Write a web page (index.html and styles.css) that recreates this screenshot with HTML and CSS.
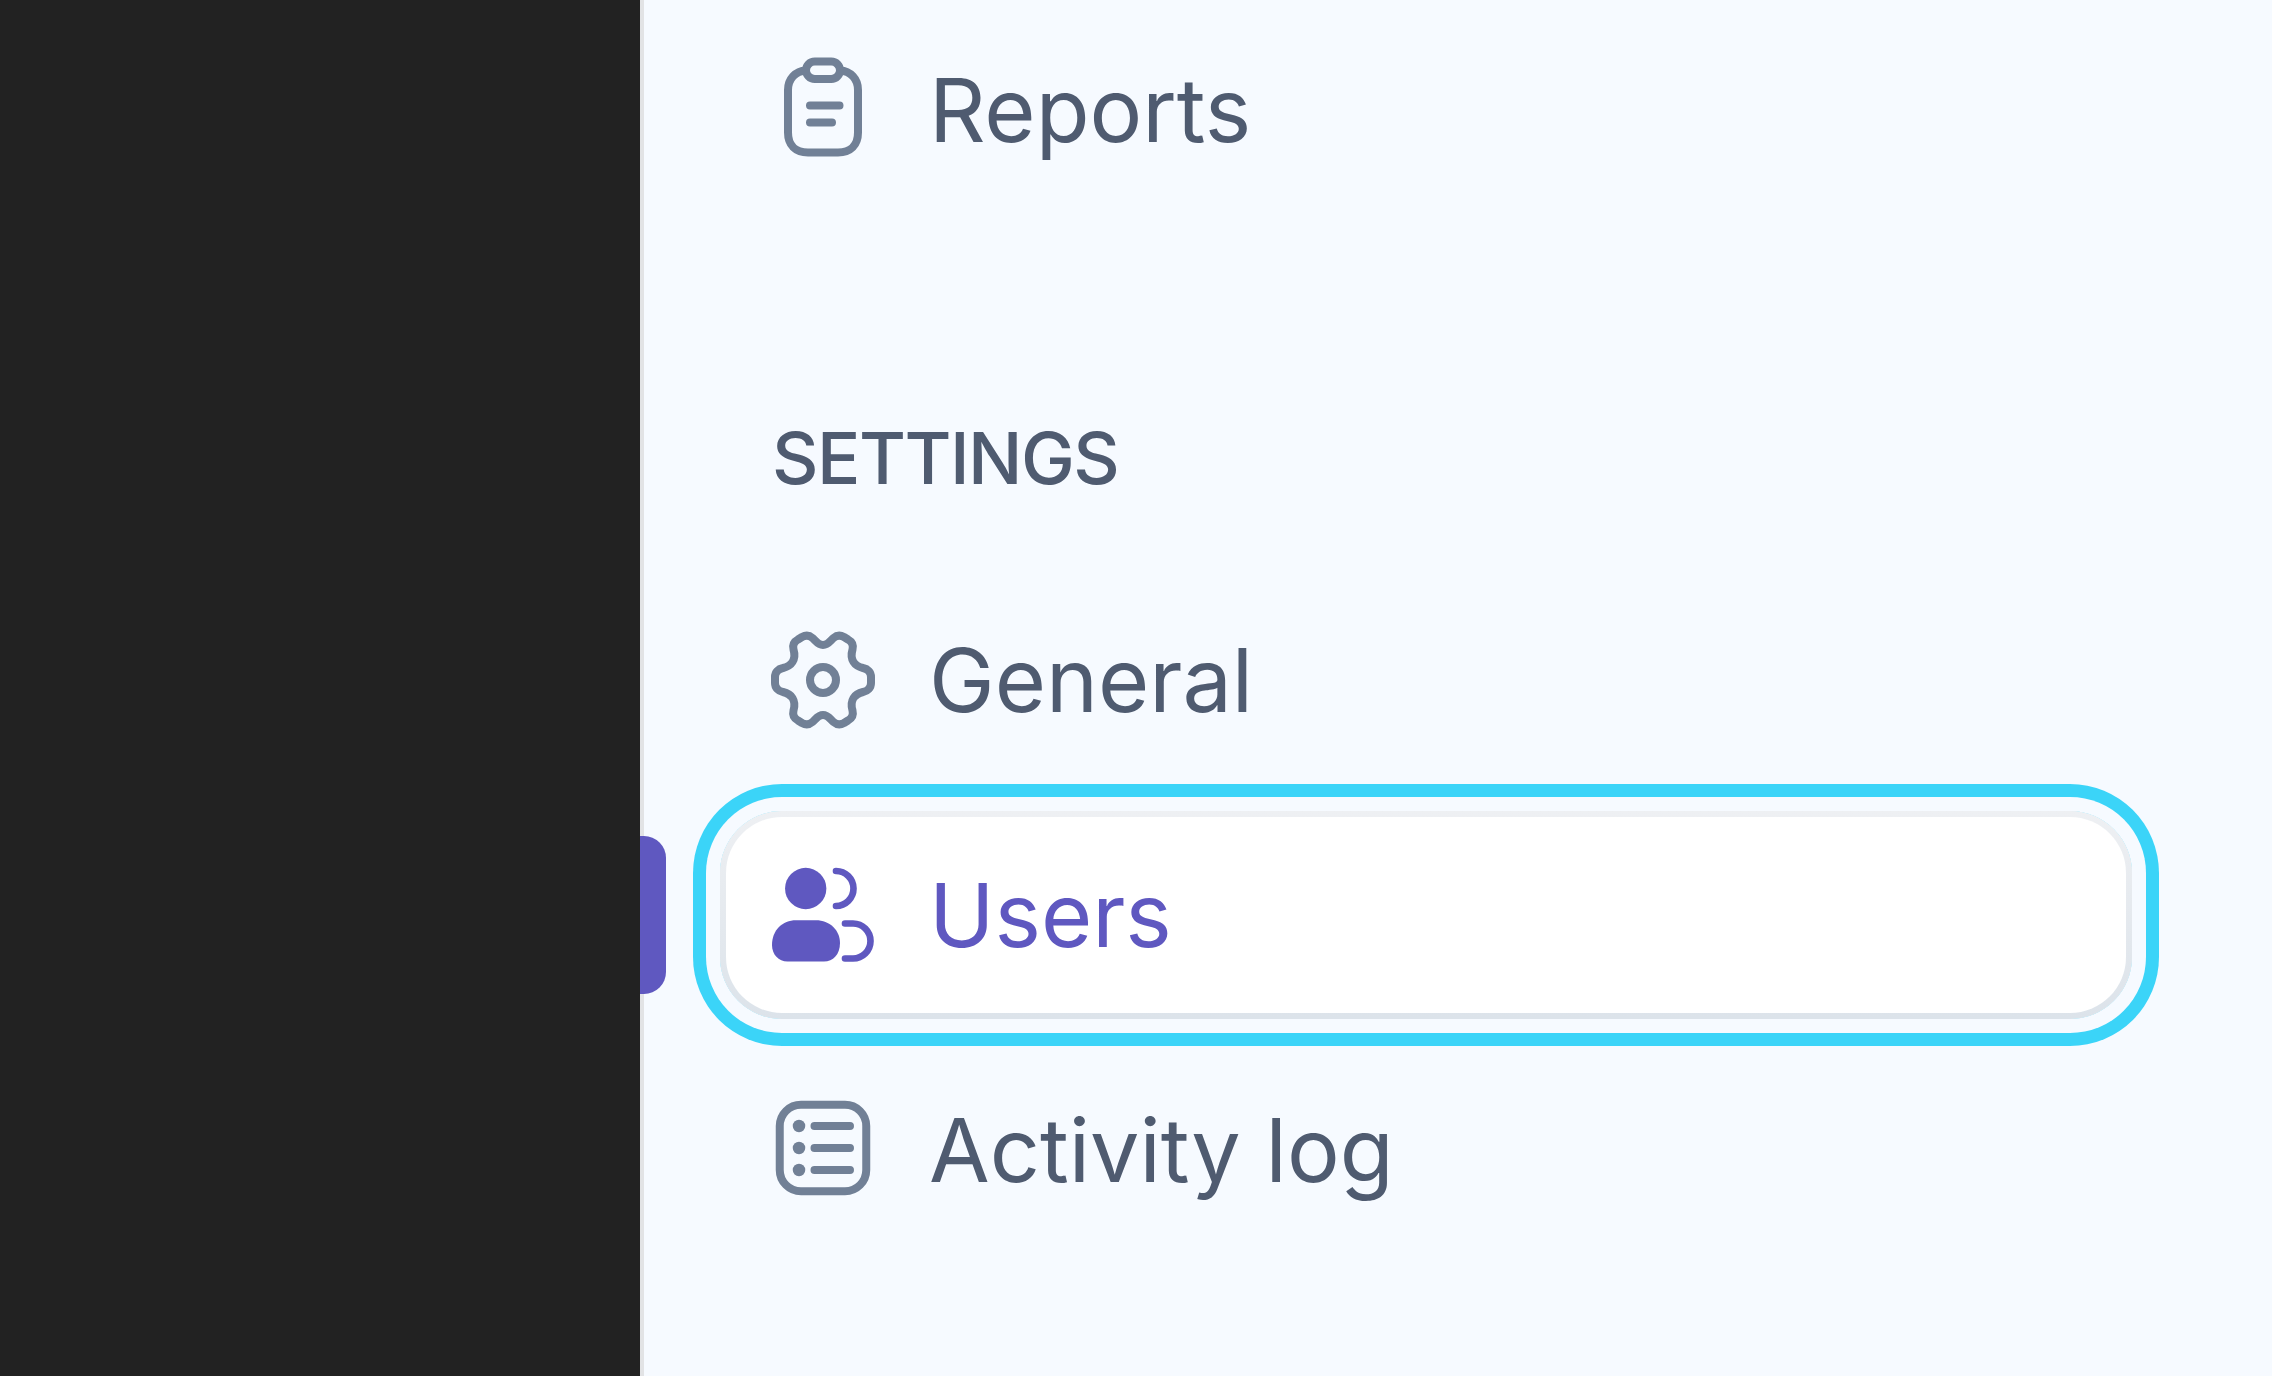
FILE: index.html
```html
<!DOCTYPE html>
<html lang="en">
<head>
    <meta charset="UTF-8">
    <title>Settings - Users</title>
    <link rel="stylesheet" href="styles.css">
</head>
<body>
    <div class="panel"></div>
    <nav class="sidebar">
        <a class="nav-item" href="#">
            <svg class="nav-icon" viewBox="0 0.5 24 24">
                <path d="M8.6 4.6C6.5 4.7 5 6.3 5 8.5V17C5 19.5 6.5 21 9 21H15C17.5 21 19 19.5 19 17V8.5C19 6.3 17.5 4.7 15.4 4.6"/>
                <rect x="8.6" y="2.8" width="6.8" height="3.5" rx="1.75"/>
                <path d="M9.4 11.6H15.3M9.4 15H13.8"/>
            </svg>
            <span>Reports</span>
        </a>

        <h2 class="nav-heading">SETTINGS</h2>

        <a class="nav-item" href="#">
            <svg class="nav-icon" viewBox="0 0 24 24">
                <path d="M12 5C13 5 13.5 4.1 14.1 3.6C14.8 3 15.5 3 16.2 3.4L17 3.9C17.9 4.4 18.1 5.1 17.9 5.9C17.6 6.9 17.6 7.6 18.1 8.4C18.6 9.2 19.2 9.4 20 9.6C21 9.8 21.6 10.5 21.6 11.4V12.6C21.6 13.5 21 14.2 20 14.4C19.2 14.6 18.6 14.8 18.1 15.6C17.6 16.4 17.6 17.1 17.9 18.1C18.1 18.9 17.9 19.6 17 20.1L16.2 20.6C15.5 21 14.8 21 14.1 20.4C13.5 19.9 13 19 12 19C11 19 10.5 19.9 9.9 20.4C9.2 21 8.5 21 7.8 20.6L7 20.1C6.1 19.6 5.9 18.9 6.1 18.1C6.4 17.1 6.4 16.4 5.9 15.6C5.4 14.8 4.8 14.6 4 14.4C3 14.2 2.4 13.5 2.4 12.6V11.4C2.4 10.5 3 9.8 4 9.6C4.8 9.4 5.4 9.2 5.9 8.4C6.4 7.6 6.4 6.9 6.1 5.9C5.9 5.1 6.1 4.4 7 3.9L7.8 3.4C8.5 3 9.2 3 9.9 3.6C10.5 4.1 11 5 12 5Z"/>
                <circle cx="12" cy="12" r="2.6"/>
            </svg>
            <span>General</span>
        </a>

        <a class="nav-item active" href="#">
            <span class="nav-marker"></span>
            <svg class="nav-icon" viewBox="0 0 24 24">
                <circle class="solid" cx="8.54" cy="6.7" r="4.13"/>
                <path class="solid" d="M6.6 13.04H10.6C13.3 13.04 15.4 15 15.4 17.6C15.4 19.9 14 21.3 12.2 21.3H4.9C3.1 21.3 1.8 19.9 1.8 18C1.8 15 3.9 13.04 6.6 13.04Z"/>
                <path class="thin" d="M14.6 3.2A3.5 3.5 0 0 1 14.6 10.2"/>
                <path class="thin" d="M16.4 13.7H18A3.5 3.5 0 0 1 18 20.7H16.4"/>
            </svg>
            <span>Users</span>
        </a>

        <a class="nav-item" href="#">
            <svg class="nav-icon" viewBox="0 0.4 24 24">
                <rect x="3.35" y="3.35" width="17.3" height="17.3" rx="4.25"/>
                <circle class="solid" cx="7.2" cy="7.6" r="1.25"/>
                <circle class="solid" cx="7.2" cy="12" r="1.25"/>
                <circle class="solid" cx="7.2" cy="16.4" r="1.25"/>
                <path d="M10.3 7.6H17.4M10.3 12H17.4M10.3 16.4H17.4"/>
            </svg>
            <span>Activity log</span>
        </a>
    </nav>
</body>
</html>
```

FILE: styles.css
```css
html, body {
    height: 100%;
}
body {
    display: flex;
    margin: 0;
    overflow: hidden;
    font-family: Inter, "Liberation Sans", sans-serif;
    background-color: #f6faff;
}
.panel {
    flex: 0 0 640px;
    background-color: #222222;
    border-right: 4px solid #e2e3e5;
}
.sidebar {
    flex: 1;
    display: flex;
    flex-direction: column;
    gap: 27px;
    padding: 6px 140px 0 76px;
}
.nav-item {
    position: relative;
    display: flex;
    align-items: center;
    gap: 46px;
    flex: 0 0 208px;
    box-sizing: border-box;
    padding: 0 37px;
    border: 6px solid transparent;
    border-radius: 62px;
    font-size: 88px;
    letter-spacing: 0;
    color: #4f5b70;
    text-decoration: none;
}
.nav-item.active {
    color: #5f58c0;
    background: linear-gradient(#ffffff, #ffffff) padding-box,
                linear-gradient(#eef0f3, #dce3ea) border-box;
    box-shadow: 0 0 0 14px #f6faff, 0 0 0 27px #3bd4f8;
}
.nav-marker {
    position: absolute;
    top: 19px;
    left: -86px;
    width: 26px;
    height: 158px;
    background-color: #5f58c0;
    border-radius: 0 22px 22px 0;
}
.nav-heading {
    margin: 181px 0 55px 52px;
    font-size: 72px;
    line-height: 1;
    font-weight: 500;
    letter-spacing: -1.5px;
    color: #4f5b70;
}
.nav-icon {
    flex: 0 0 120px;
    width: 120px;
    height: 120px;
    fill: none;
    stroke: #718096;
    stroke-width: 1.6;
    stroke-linecap: round;
    stroke-linejoin: round;
}
.nav-icon .solid {
    fill: #718096;
    stroke: none;
}
.active .nav-icon .solid {
    fill: #5f58c0;
}
.active .nav-icon .thin {
    stroke: #5f58c0;
    stroke-width: 1.33;
}
```
